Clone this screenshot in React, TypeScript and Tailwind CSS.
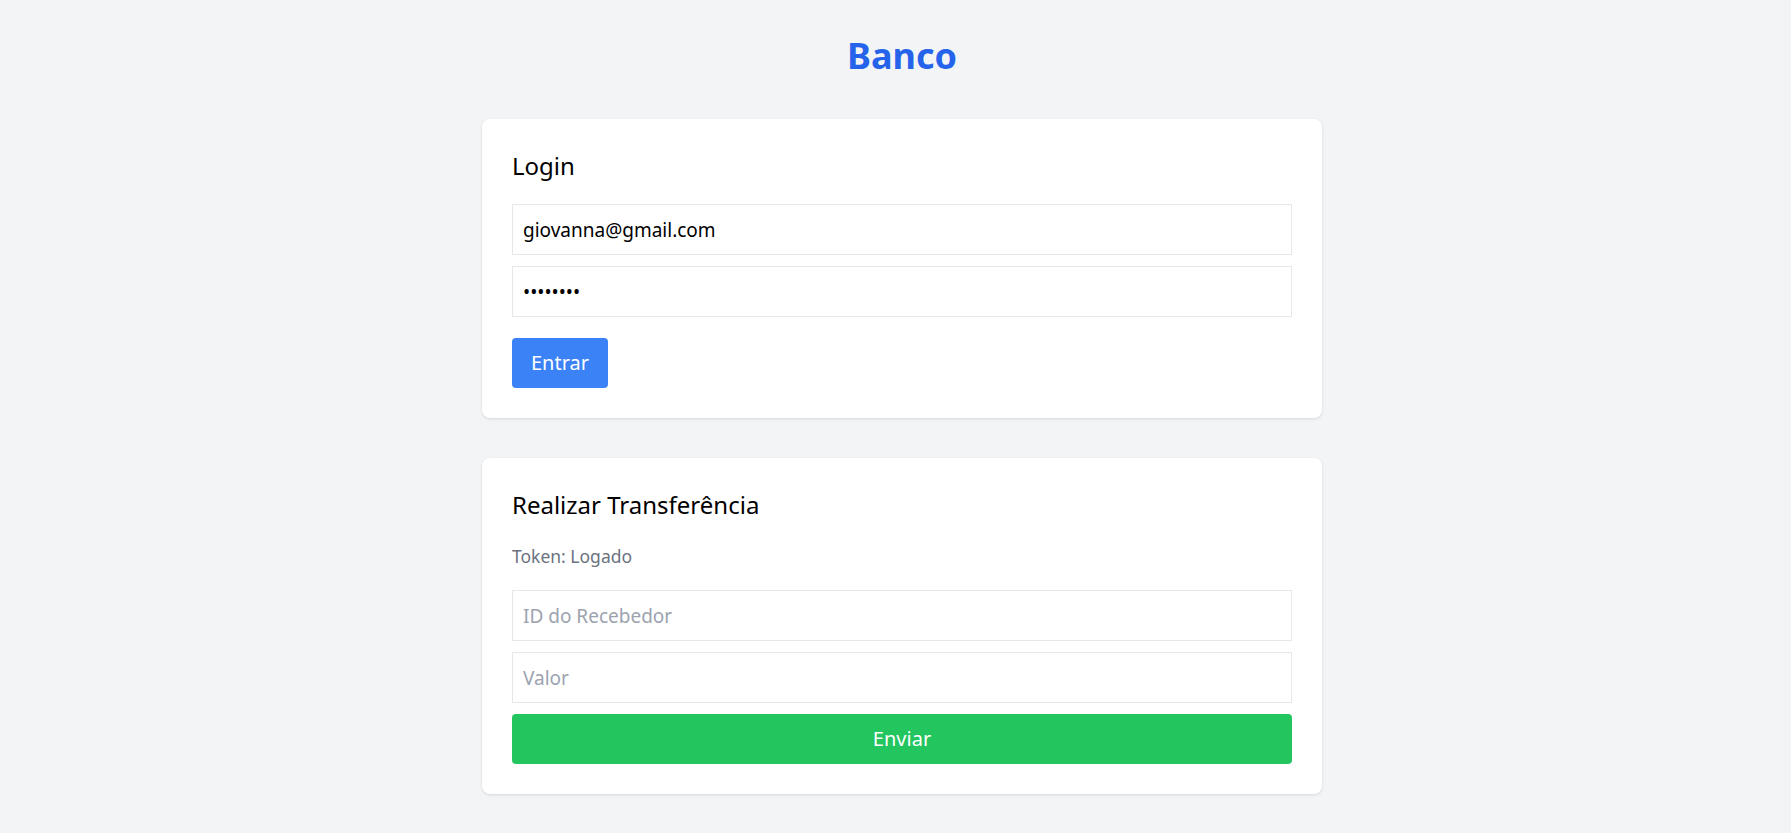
export default function App() {
  return (
    <div className="min-h-screen bg-[#f3f4f6] pl-[13px] pb-10 font-['Noto_Sans',sans-serif] text-black">
      <h1 className="pt-[34px] text-center text-[36px] leading-[44px] font-bold text-[#2563eb]">
        Banco
      </h1>
      <div className="mx-auto mt-[41px] flex w-[840px] flex-col gap-10">
        <section className="rounded-lg bg-white p-[30px] shadow-[0_1px_3px_rgba(0,0,0,0.12)]">
          <h2 className="mt-[2px] text-[24px] leading-[30px]">Login</h2>
          <div className="mt-[23px] flex flex-col gap-[11px]">
            <input
              defaultValue="giovanna@gmail.com"
              className="h-[51px] border border-[#e5e7eb] px-[10px] text-[19px] outline-none"
            />
            <input
              type="password"
              defaultValue="12345678"
              className="h-[51px] border border-[#e5e7eb] px-[10px] text-[19px] outline-none"
            />
          </div>
          <button className="mt-[21px] h-[50px] rounded bg-[#3b82f6] px-[19px] text-[20px] text-white">
            Entrar
          </button>
        </section>
        <section className="rounded-lg bg-white p-[30px] shadow-[0_1px_3px_rgba(0,0,0,0.12)]">
          <h2 className="mt-[2px] text-[24px] leading-[30px]">Realizar Transferência</h2>
          <p className="mt-[26px] text-[17.5px] leading-[20px] text-[#6b7280]">
            Token: Logado
          </p>
          <div className="mt-[24px] flex flex-col gap-[11px]">
            <input
              placeholder="ID do Recebedor"
              className="h-[51px] border border-[#e5e7eb] px-[10px] text-[19px] outline-none placeholder:text-[#9ca3af]"
            />
            <input
              placeholder="Valor"
              className="h-[51px] border border-[#e5e7eb] px-[10px] text-[19px] outline-none placeholder:text-[#9ca3af]"
            />
            <button className="h-[50px] w-full rounded bg-[#22c55e] text-[20px] text-white">
              Enviar
            </button>
          </div>
        </section>
      </div>
    </div>
  );
}
